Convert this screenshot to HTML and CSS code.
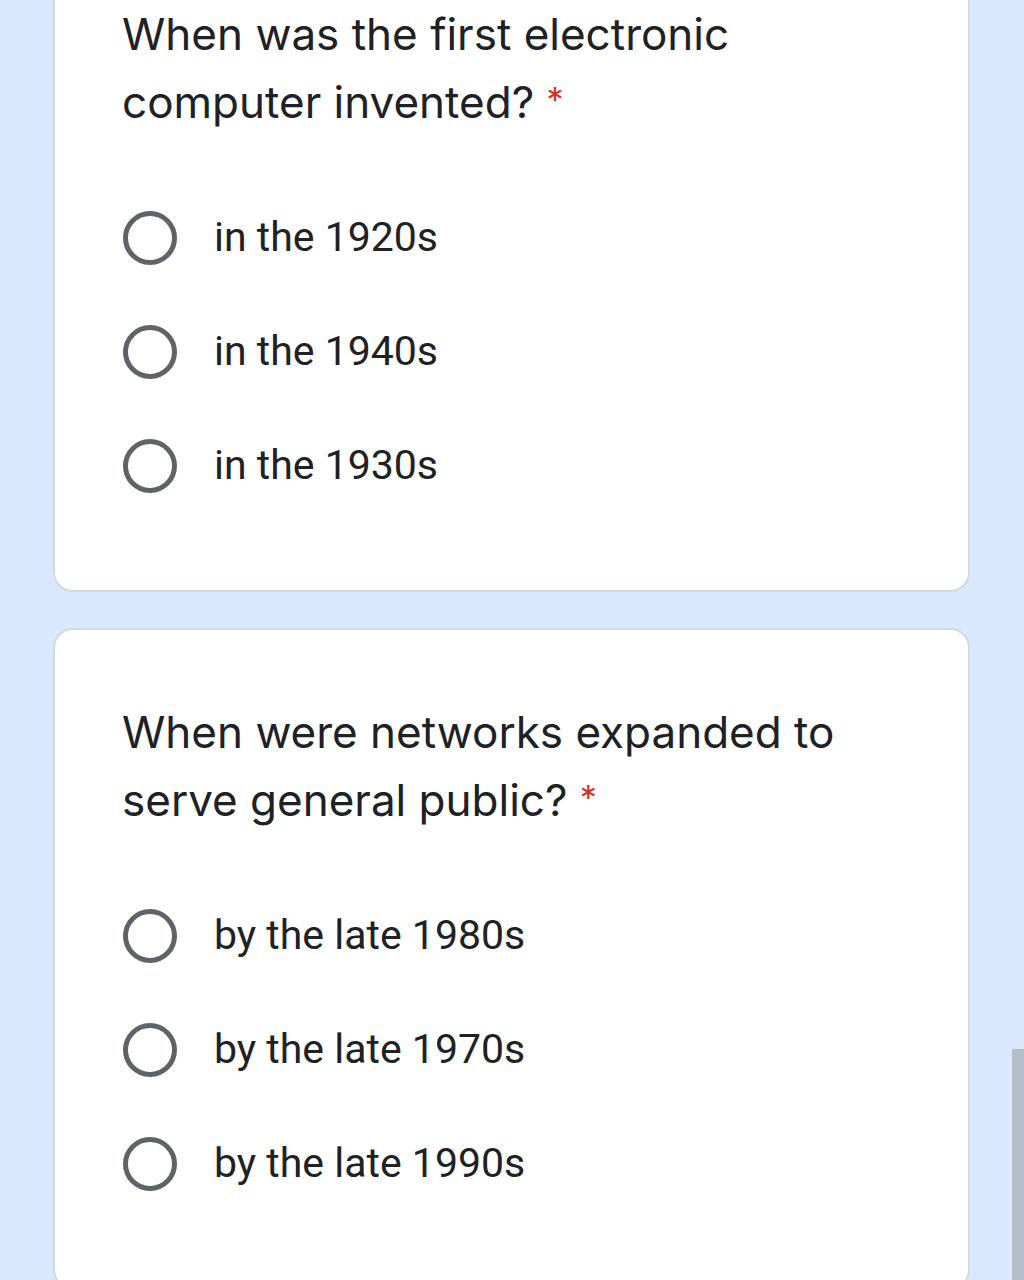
FILE: index.html
```html
<!DOCTYPE html>
<html>
<head>
<meta charset="utf-8">
<link rel="stylesheet" href="styles.css">
</head>
<body>
<div class="page">
  <div class="card">
    <div class="question">When was the first electronic computer invented?&nbsp;<span class="req">*</span></div>
    <div class="options">
      <div class="option"><span class="radio"></span><span class="label">in the 1920s</span></div>
      <div class="option"><span class="radio"></span><span class="label">in the 1940s</span></div>
      <div class="option"><span class="radio"></span><span class="label">in the 1930s</span></div>
    </div>
  </div>
  <div class="card">
    <div class="question">When were networks expanded to serve general public?&nbsp;<span class="req">*</span></div>
    <div class="options">
      <div class="option"><span class="radio"></span><span class="label">by the late 1980s</span></div>
      <div class="option"><span class="radio"></span><span class="label">by the late 1970s</span></div>
      <div class="option"><span class="radio"></span><span class="label">by the late 1990s</span></div>
    </div>
  </div>
</div>
<div class="scrollbar"></div>
</body>
</html>
```
FILE: styles.css
```css
html, body {
  margin: 0;
  padding: 0;
  background: #d9e8fc;
  height: 1280px;
  overflow: hidden;
}
.page {
  margin-top: -70px;
  margin-left: 53px;
  width: 917px;
  display: flex;
  flex-direction: column;
  gap: 36px;
}
.card {
  background: #fff;
  border: 2px solid #d3d9e0;
  border-radius: 20px;
  padding: 68px 68px 67px 67px;
}
.question {
  font-family: Inter, sans-serif;
  font-size: 44px;
  line-height: 68px;
  color: #202124;
  width: 770px;
}
.req {
  color: #d93025;
  font-size: 34px;
  line-height: 1;
  display: inline-block;
  vertical-align: 6px;
}
.options {
  margin-top: 45px;
  display: flex;
  flex-direction: column;
}
.option {
  height: 114px;
  display: flex;
  align-items: center;
}
.radio {
  width: 44px;
  height: 44px;
  border: 5px solid #5f6368;
  border-radius: 50%;
  margin-left: 1px;
  flex: none;
}
.label {
  margin-left: 37px;
  font-family: Roboto, sans-serif;
  font-size: 41px;
  line-height: 50px;
  margin-top: -2px;
  color: #202124;
}
.scrollbar {
  position: absolute;
  right: 0;
  top: 1049px;
  width: 12px;
  height: 231px;
  background: #b5bfcb;
}
```
